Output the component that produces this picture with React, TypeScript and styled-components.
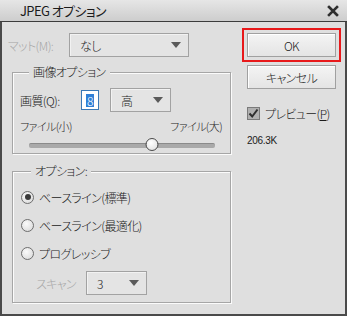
import styled, { createGlobalStyle } from 'styled-components';

const GlobalStyle = createGlobalStyle`
  html, body {
    margin: 0;
    padding: 0;
    background: #dfdfdf;
  }
  body {
    font-family: "Noto Sans CJK JP", "Noto Sans", sans-serif;
    font-feature-settings: "palt";
    font-weight: 300;
    letter-spacing: -0.6px;
    color: #1b1b1b;
  }
`;

const Window = styled.div`
  width: 347px;
  height: 316px;
  box-sizing: border-box;
  border: 2px solid #4a4a4a;
  border-top: none;
  background: #dfdfdf;
  display: flex;
  flex-direction: column;
`;

const TitleBar = styled.div`
  height: 21px;
  flex-shrink: 0;
  display: flex;
  align-items: center;
  justify-content: space-between;
  padding: 0 6px 0 20px;
  background: linear-gradient(#e6e6e6, #cdcdcd);
  border-bottom: 1px solid #3c3c3c;
  margin: 0 -2px;
  font-size: 13px;
  font-weight: 400;
`;

const CloseIcon = styled.svg`
  width: 12px;
  height: 12px;
  margin-right: 2px;
`;

const Body = styled.div`
  display: flex;
  flex: 1;
`;

const LeftCol = styled.div`
  width: 230px;
  display: flex;
  flex-direction: column;
`;

const MatRow = styled.div`
  display: flex;
  align-items: center;
  margin: 11px 0 0 6px;
  height: 24px;
`;

const MutedLabel = styled.span<{ $width: number }>`
  width: ${(p) => p.$width}px;
  color: #a6a6a6;
  font-size: 12px;
`;

const Select = styled.div<{ $width: number }>`
  width: ${(p) => p.$width}px;
  height: 24px;
  box-sizing: border-box;
  border: 1px solid #a2a2a2;
  background: #e4e4e4;
  box-shadow: inset 1px 1px 0 #f2f2f2;
  display: flex;
  align-items: center;
  justify-content: space-between;
  padding: 0 7px 0 10px;
  font-size: 12px;
`;

const Arrow = styled.span`
  width: 0;
  height: 0;
  border-left: 5px solid transparent;
  border-right: 5px solid transparent;
  border-top: 6px solid #5a5a5a;
`;

const Group = styled.div<{ $height: number; $top: number }>`
  margin: ${(p) => p.$top}px 0 0 10px;
  width: 219px;
  height: ${(p) => p.$height}px;
  box-sizing: border-box;
  border: 1px solid #a6a6a6;
  box-shadow: 1px 1px 0 #fbfbfb, inset 1px 1px 0 #fbfbfb;
  display: flex;
  flex-direction: column;
`;

const Legend = styled.span<{ $left: number }>`
  align-self: flex-start;
  margin: -10px 0 0 ${(p) => p.$left}px;
  padding: 0 4px;
  background: #dfdfdf;
  font-size: 12px;
  line-height: 18px;
  height: 18px;
`;

const QualityRow = styled.div`
  display: flex;
  align-items: center;
  height: 24px;
  margin: 7px 0 0 7px;
`;

const FieldLabel = styled.span`
  width: 61px;
  font-size: 12px;
`;

const NumberBox = styled.div`
  width: 18px;
  height: 20px;
  box-sizing: border-box;
  border: 1px solid #3a78b5;
  background: #fff;
  display: flex;
  align-items: center;
  padding-left: 4px;
  margin-right: 11px;
`;

const Selected = styled.span`
  background: #2f7fd6;
  color: #fff;
  font-size: 12px;
  line-height: 13px;
  padding: 0 1px;
  letter-spacing: 0;
`;

const SliderLabels = styled.div`
  display: flex;
  justify-content: space-between;
  margin: 7px 8px 0 7px;
  font-size: 11px;
  line-height: 14px;
`;

const Slider = styled.div`
  position: relative;
  height: 14px;
  margin: 5px 15px 0 16px;
  display: flex;
  align-items: center;
`;

const Track = styled.div`
  flex: 1;
  height: 4px;
  border-radius: 2px;
  background: #a9a9a9;
  border-top: 1px solid #8a8a8a;
`;

const Thumb = styled.div`
  position: absolute;
  top: 0;
  width: 13px;
  height: 13px;
  box-sizing: border-box;
  border-radius: 50%;
  border: 1px solid #4a4a4a;
  background: radial-gradient(circle at 40% 35%, #ffffff, #dcdcdc);
  transform: translateX(-50%);
`;

const RadioList = styled.div`
  display: flex;
  flex-direction: column;
  gap: 8px;
  margin: 7px 0 0 8px;
`;

const RadioRow = styled.label`
  display: flex;
  align-items: center;
  height: 20px;
  font-size: 12px;
`;

const RadioCircle = styled.span<{ $checked?: boolean }>`
  width: 13px;
  height: 13px;
  box-sizing: border-box;
  border-radius: 50%;
  border: 1px solid #6e6e6e;
  background: radial-gradient(circle at 40% 35%, #fafafa, #d6d6d6);
  margin-right: 5px;
  display: flex;
  align-items: center;
  justify-content: center;
  &::after {
    content: '';
    display: ${(p) => (p.$checked ? 'block' : 'none')};
    width: 6px;
    height: 6px;
    border-radius: 50%;
    background: #3a3a3a;
  }
`;

const ScanRow = styled.div`
  display: flex;
  align-items: center;
  height: 24px;
  margin: 8px 0 0 23px;
`;

const RightCol = styled.div`
  display: flex;
  flex-direction: column;
  margin-left: 15px;
  padding-top: 11px;
`;

const Button = styled.button<{ $focused?: boolean }>`
  width: 89px;
  height: 24px;
  box-sizing: border-box;
  border: 1px solid #a0a0a0;
  background: linear-gradient(#f4f4f4, #e4e4e4);
  box-shadow: inset 1px 1px 0 #ffffff;
  font-family: inherit;
  font-feature-settings: "palt";
  font-weight: 300;
  letter-spacing: -0.6px;
  font-size: 12px;
  color: #1b1b1b;
  padding: 0;
  outline: ${(p) => (p.$focused ? '2px solid #e8191b' : 'none')};
  outline-offset: 3px;
  & + & {
    margin-top: 8px;
  }
`;

const CheckRow = styled.label`
  display: flex;
  align-items: center;
  height: 16px;
  margin-top: 16px;
  font-size: 12px;
`;

const CheckBox = styled.span`
  width: 13px;
  height: 13px;
  box-sizing: border-box;
  border: 1px solid #7a7a7a;
  background: #b0b0b0;
  margin-right: 5px;
  display: flex;
  align-items: center;
  justify-content: center;
`;

const Underline = styled.span`
  text-decoration: underline;
`;

const SizeText = styled.div`
  margin-top: 13px;
  font-size: 10px;
  line-height: 14px;
  font-family: "Liberation Sans", sans-serif;
  letter-spacing: -0.3px;
`;

const App = () => {
  const quality = 8;
  const sliderPos = 0.66;

  return (
    <>
      <GlobalStyle />
      <Window>
        <TitleBar>
          <span>JPEG オプション</span>
          <CloseIcon viewBox="0 0 12 12">
            <path d="M2 2 L10 10 M10 2 L2 10" stroke="#2f2f2f" strokeWidth="2.6" strokeLinecap="square" />
          </CloseIcon>
        </TitleBar>
        <Body>
          <LeftCol>
            <MatRow>
              <MutedLabel $width={61}>マット(M):</MutedLabel>
              <Select $width={120}>
                <span>なし</span>
                <Arrow />
              </Select>
            </MatRow>

            <Group $top={15} $height={82}>
              <Legend $left={16}>画像オプション</Legend>
              <QualityRow>
                <FieldLabel>画質(Q):</FieldLabel>
                <NumberBox>
                  <Selected>{quality}</Selected>
                </NumberBox>
                <Select $width={61}>
                  <span>高</span>
                  <Arrow />
                </Select>
              </QualityRow>
              <SliderLabels>
                <span>ファイル(小)</span>
                <span>ファイル(大)</span>
              </SliderLabels>
              <Slider>
                <Track />
                <Thumb style={{ left: `${sliderPos * 100}%` }} />
              </Slider>
            </Group>

            <Group $top={17} $height={132}>
              <Legend $left={18}>オプション:</Legend>
              <RadioList>
                <RadioRow>
                  <RadioCircle $checked />
                  ベースライン(標準)
                </RadioRow>
                <RadioRow>
                  <RadioCircle />
                  ベースライン(最適化)
                </RadioRow>
                <RadioRow>
                  <RadioCircle />
                  プログレッシブ
                </RadioRow>
              </RadioList>
              <ScanRow>
                <MutedLabel $width={50}>スキャン</MutedLabel>
                <Select $width={61}>
                  <span>3</span>
                  <Arrow />
                </Select>
              </ScanRow>
            </Group>
          </LeftCol>

          <RightCol>
            <Button $focused>OK</Button>
            <Button>キャンセル</Button>
            <CheckRow>
              <CheckBox>
                <svg width="11" height="11" viewBox="0 0 11 11">
                  <path d="M1.5 5.5 L4.2 8.5 L9.5 1.5" fill="none" stroke="#2e2e2e" strokeWidth="2" />
                </svg>
              </CheckBox>
              プレビュー(<Underline>P</Underline>)
            </CheckRow>
            <SizeText>206.3K</SizeText>
          </RightCol>
        </Body>
      </Window>
    </>
  );
};

export default App;
